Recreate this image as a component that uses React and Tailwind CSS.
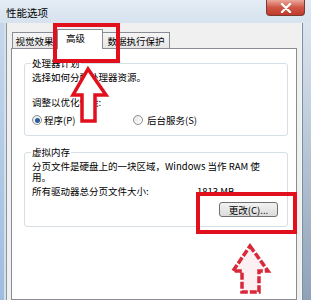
import React from "react";

const FONT = { fontFamily: '"Noto Sans CJK SC", "Noto Sans", sans-serif' };

function Radio({ checked }) {
  return (
    <span className="w-[10px] h-[10px] rounded-full border border-[#8e8f8f] bg-gradient-to-br from-[#e6e6e6] to-[#ffffff] flex items-center justify-center shrink-0">
      {checked && <span className="w-[5px] h-[5px] rounded-full bg-[#2a5f9e]" />}
    </span>
  );
}

function GroupBox({ title, className, children }) {
  return (
    <div className={`border border-[#d5dfe5] rounded-[3px] pl-[7px] flex flex-col ${className}`}>
      <span className="-mt-[6px] -ml-[1px] w-fit px-[1px] bg-white leading-[10px]">{title}</span>
      {children}
    </div>
  );
}

export default function App() {
  return (
    <div
      className="relative w-[311px] h-[300px] overflow-hidden flex flex-col bg-[#c9d8e8] text-black text-[9.5px] leading-[10px]"
      style={FONT}
    >
      {/* Title bar */}
      <div className="h-[23px] shrink-0 flex items-start justify-between bg-gradient-to-b from-[#e4ecf4] to-[#d6e2ee]">
        <span className="pl-[6px] pt-[8px] text-[10.5px] leading-[10px]">性能选项</span>
        <div className="mr-[6px] w-[39px] h-[16px] rounded-b-[4px] border border-t-0 border-[#7a3a34] bg-gradient-to-b from-[#e9a79b] via-[#cf5545] to-[#c0392c] flex items-center justify-center">
          <svg width="12" height="10" viewBox="0 0 12 10">
            <path d="M2 1 L10 9 M10 1 L2 9" stroke="#fff" strokeWidth="2.4" strokeLinecap="round" />
          </svg>
        </div>
      </div>

      <div className="flex flex-1 min-h-0">
        {/* left frame */}
        <div className="w-[7px] flex">
          <div className="w-[4px] bg-gradient-to-b from-[#c4d7ec] to-[#9dbde0]" />
          <div className="w-[3px] bg-[#d8dfe7] border-r border-[#8896a6]" />
        </div>

        {/* Client */}
        <div className="w-[294px] bg-[#f0f0f0] px-[4px] flex flex-col">
          {/* Tabs */}
          <div className="flex items-end pt-[6px] pl-[1px] h-[26px]">
            <div className="w-[45px] h-[16px] mb-[1px] border border-b-0 border-[#898c95] bg-gradient-to-b from-[#f6f6f6] to-[#e6e6e6] flex items-center justify-center">
              视觉效果
            </div>
            <div className="relative z-10 w-[46px] h-[20px] border border-b-0 border-[#898c95] bg-white pl-[8px] pt-[3px]">
              高级
            </div>
            <div className="w-[67px] h-[16px] mb-[1px] border border-b-0 border-l-0 border-[#898c95] bg-gradient-to-b from-[#f6f6f6] to-[#e6e6e6] flex items-center justify-center">
              数据执行保护
            </div>
          </div>

          {/* Panel */}
          <div className="flex-1 -mt-[1px] border border-[#898c95] bg-white pl-[12px] pr-[8px]">
            <GroupBox title="处理器计划" className="mt-[14px] pb-[10px]">
              <div className="mt-[4px]">选择如何分配处理器资源。</div>
              <div className="mt-[15px]">调整以优化性能:</div>
              <div className="mt-[8px] flex items-center h-[10px]">
                <div className="w-[101px] flex items-center gap-[2px]">
                  <Radio checked />
                  <span>程序(P)</span>
                </div>
                <div className="flex items-center gap-[4px]">
                  <Radio />
                  <span>后台服务(S)</span>
                </div>
              </div>
            </GroupBox>

            <GroupBox title="虚拟内存" className="mt-[16px] pb-[9px]">
              <div className="mt-[4px] w-[245px] leading-[11px]">
                分页文件是硬盘上的一块区域，Windows 当作 RAM 使用。
              </div>
              <div className="mt-[3px] flex">
                <span className="w-[165px]">所有驱动器总分页文件大小:</span>
                <span>1813 MB</span>
              </div>
              <div className="mt-[6px] flex justify-end pr-[9px]">
                <button className="w-[59px] h-[15px] rounded-[3px] border border-[#707070] bg-gradient-to-b from-[#f2f2f2] to-[#dcdcdc] text-[9.5px] leading-[10px] flex items-center justify-center">
                  更改(C)...
                </button>
              </div>
            </GroupBox>
          </div>
        </div>

        {/* right frame */}
        <div className="flex-1 flex">
          <div className="w-[2px] bg-[#f4f6f8] border-r border-[#7d8ea2]" />
          <div className="flex-1 bg-gradient-to-b from-[#dbe5ef] via-[#b4c3d3] to-[#8fa2b7]" />
        </div>
      </div>

      {/* Annotations */}
      <div className="absolute left-[53px] top-[23px] w-[67px] h-[40px] border-4 border-[#e2101d] pointer-events-none" />
      <div className="absolute left-[196px] top-[192px] w-[101px] h-[42px] border-4 border-[#e2101d] pointer-events-none" />
      <svg className="absolute left-0 top-0 pointer-events-none" width="311" height="300">
        <polygon
          points="88,69 106,95 95,95 95,121 82,121 82,95 73,95"
          fill="#fff"
          stroke="#e2101d"
          strokeWidth="3.5"
          strokeLinejoin="miter"
        />
        <polygon
          points="250,246 268,271 259,271 259,292 242,292 242,271 233,271"
          fill="#fdf0f2"
          stroke="#d9283a"
          strokeWidth="3.5"
          strokeDasharray="7 2"
        />
      </svg>
    </div>
  );
}
